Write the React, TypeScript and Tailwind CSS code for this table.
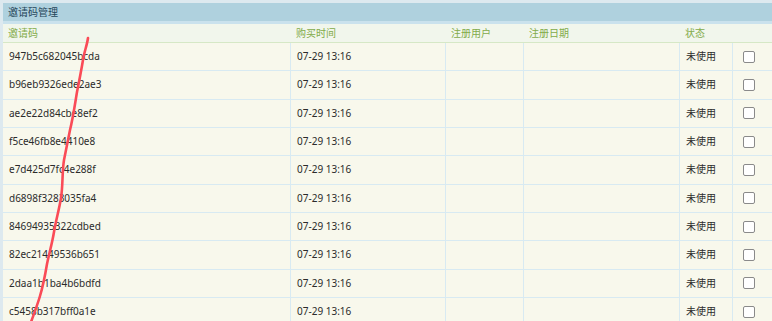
import React from "react";

const rows = [
  "947b5c682045bcda",
  "b96eb9326ede2ae3",
  "ae2e22d84cbe8ef2",
  "f5ce46fb8e4410e8",
  "e7d425d7fc4e288f",
  "d6898f3283035fa4",
  "84694935322cdbed",
  "82ec21449536b651",
  "2daa1b1ba4b6bdfd",
  "c5458b317bff0a1e",
];

const font = { fontFamily: '"Noto Sans", "Noto Sans CJK SC", sans-serif' };

export default function App() {
  return (
    <div
      className="relative w-[772px] h-[321px] overflow-hidden bg-white border-t-[3px] border-l-[3px] border-[#dde9ef] text-[10px]"
      style={font}
    >
      <div className="h-[18px] bg-[#afd1de] flex items-center pl-[5px] text-[#25465a] text-[10px]">
        邀请码管理
      </div>
      <div className="h-[3px] bg-[#cae2ed]" />
      <div className="grid grid-cols-[288px_155px_78px_156px_53px_1fr] h-[19px] bg-[#f1f6ec] border-b border-[#d6e8c6] text-[#82ab4a] items-center">
        <div className="pl-[5px]">邀请码</div>
        <div className="pl-[5px]">购买时间</div>
        <div className="pl-[5px]">注册用户</div>
        <div className="pl-[5px]">注册日期</div>
        <div className="pl-[5px]">状态</div>
        <div />
      </div>
      {rows.map((code) => (
        <div
          key={code}
          className="grid grid-cols-[288px_155px_78px_156px_53px_1fr] h-[28.33px] bg-[#f8f8ec] border-b border-[#d8eaf2] text-[#2b2b2b]"
        >
          <div className="border-r border-[#d8eaf2] flex items-center pl-[6px]">{code}</div>
          <div className="border-r border-[#d8eaf2] flex items-center pl-[6px]">07-29 13:16</div>
          <div className="border-r border-[#d8eaf2]" />
          <div className="border-r border-[#d8eaf2]" />
          <div className="border-r border-[#d8eaf2] flex items-center pl-[6px]">未使用</div>
          <div className="flex items-center pl-[10px]">
            <span className="w-[12px] h-[12px] rounded-[2px] border border-[#8a8a8a] bg-white" />
          </div>
        </div>
      ))}
      <svg
        className="absolute left-[-3px] top-[-3px] pointer-events-none"
        width="772"
        height="321"
        viewBox="0 0 772 321"
      >
        <path
          d="M88 38 C87 46 84 52 83 60 C81 72 79 82 77 92 C75 104 73 118 70 130 C68 140 66 150 64 160 C62 172 63 186 61 198 C59 210 56 220 54 232 C52 244 49 254 47 264 C45 276 43 286 40 296 C37 306 34 314 31 322"
          fill="none"
          stroke="#fa4b57"
          strokeWidth="2.6"
          strokeLinecap="round"
        />
      </svg>
    </div>
  );
}
